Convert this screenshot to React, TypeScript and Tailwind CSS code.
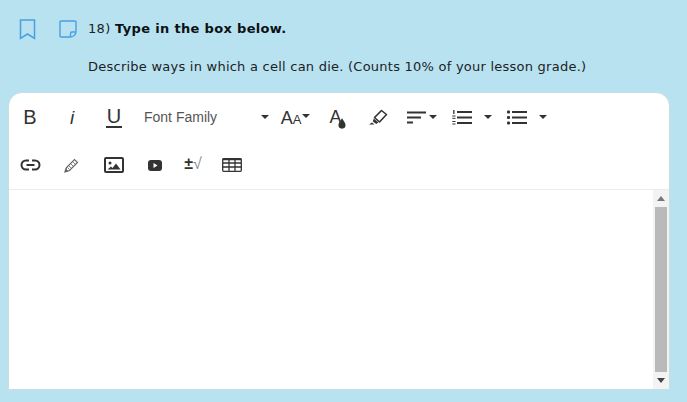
import type { ReactNode } from 'react'

const Caret = ({ className = '' }: { className?: string }) => (
  <svg width="8" height="4" viewBox="0 0 8 4" className={className}>
    <path d="M0 0h8L4 4z" fill="#333" />
  </svg>
)

function ToolButton({ children, className = 'w-[42px]' }: { children: ReactNode; className?: string }) {
  return <div className={`flex h-[48px] shrink-0 items-center justify-center text-[#333] ${className}`}>{children}</div>
}

const Bookmark = () => (
  <svg width="17" height="21" viewBox="0 0 17 21" fill="none" stroke="#4a9fe3" strokeWidth="1.500">
    <path d="M1.500 1h14v18.500l-7-4.500-7 4.500z" />
  </svg>
)

const Note = () => (
  <svg width="18" height="18" viewBox="0 0 18 18" fill="none" stroke="#4a9fe3" strokeWidth="1.400">
    <path d="M11.500 17H2a1 1 0 0 1-1-1V2a1 1 0 0 1 1-1h14a1 1 0 0 1 1 1v9.500c0 3-2.500 5.500-5.500 5.500z" />
    <path d="M11.500 16.500v-3a1.500 1.500 0 0 1 1.500-1.500h3.500" />
  </svg>
)

const Lines = ({ ordered }: { ordered?: boolean }) => (
  <svg width="20" height="15" viewBox="0 0 20 15" fill="#333">
    <rect x="5" y="1" width="15" height="2" />
    <rect x="5" y="6.500" width="15" height="2" />
    <rect x="5" y="12" width="15" height="2" />
    {ordered ? (
      <>
        <rect x="1.200" y="0" width="1.300" height="4" />
        <rect x="0.300" y="5.500" width="3.200" height="1" />
        <rect x="0.300" y="7.800" width="3.200" height="1" />
        <rect x="0.300" y="11" width="3.200" height="1" />
        <rect x="0.300" y="13.500" width="3.200" height="1" />
      </>
    ) : (
      <>
        <rect x="0" y="0.500" width="3" height="3" rx="1" />
        <rect x="0" y="6" width="3" height="3" rx="1" />
        <rect x="0" y="11.500" width="3" height="3" rx="1" />
      </>
    )}
  </svg>
)

export default function App() {
  return (
    <div className="h-[402px] w-[687px] overflow-hidden bg-[#b8e2f0] font-['DejaVu_Sans',sans-serif] text-[13px] text-[#1c2326]">
      <div className="flex h-[56px] items-center pl-[19px] pt-[2px]">
        <Bookmark />
        <div className="ml-[23px]">
          <Note />
        </div>
        <p className="ml-[11px] tracking-[0.33px]">
          18) <b className="text-[#0c1114]">Type in the box below.</b>
        </p>
      </div>
      <p className="ml-[88px] mt-[3px] h-[33px] leading-[16px] tracking-[0.24px]">
        Describe ways in which a cell can die. (Counts 10% of your lesson grade.)
      </p>

      <div className="ml-[8px] flex h-[298px] w-[662px] flex-col overflow-hidden rounded-t-[14px] border border-[#c9dde4] bg-white">
        <div className="h-[97px] shrink-0 border-b border-[#ececec] font-['Liberation_Sans',sans-serif]">
          <div className="flex h-[48px]">
            <ToolButton><span className="text-[20px] leading-none">B</span></ToolButton>
            <ToolButton><span className="text-[19px] italic leading-none">i</span></ToolButton>
            <ToolButton>
              <span className="border-b-2 border-[#333] px-[1px] text-[20px] leading-[20px]">U</span>
            </ToolButton>
            <div className="flex h-[48px] w-[140px] shrink-0 items-center pl-[9px] text-[14px] text-[#555]">
              <span>Font Family</span>
              <Caret className="ml-auto mr-[6px]" />
            </div>
            <ToolButton className="w-[41px]">
              <span className="flex items-baseline pt-[2px]">
                <span className="text-[18px] leading-none">A</span>
                <span className="text-[13px] leading-none">A</span>
              </span>
              <Caret className="mb-[2px] ml-[1px]" />
            </ToolButton>
            <ToolButton className="w-[41px]">
              <span className="relative block h-[24px] w-[14px]">
                <span className="absolute left-0 top-[3px] text-[18px] leading-none">A</span>
                <svg width="8" height="11" viewBox="0 0 9 12" className="absolute left-[8px] top-[13px]">
                  <path d="M4.500 0C6 3 8.500 5 8.500 7.800a4 4 0 0 1-8 0C.5 5 3 3 4.500 0z" fill="#333" />
                </svg>
              </span>
            </ToolButton>
            <ToolButton>
              <svg width="19" height="17" viewBox="0 0 19 17" fill="none">
                <path d="M5.500 8.500L12.500 1.500l5 4-7 7.500z" stroke="#333" strokeWidth="1.600" strokeLinejoin="round" />
                <path d="M4.800 9.500l4.500 4-2 1.500-3.500-2.500zM3 13.500l2.500 2H0z" fill="#333" />
              </svg>
            </ToolButton>
            <ToolButton className="w-[46px]">
              <svg width="19" height="13" viewBox="0 0 19 13" fill="#333">
                <rect y="0.500" width="19" height="2" />
                <rect y="5.500" width="14" height="2" />
                <rect y="10.500" width="6" height="2" />
              </svg>
              <Caret className="ml-[3px]" />
            </ToolButton>
            <ToolButton className="w-[34px]"><Lines ordered /></ToolButton>
            <ToolButton className="w-[18px]"><Caret /></ToolButton>
            <ToolButton className="w-[40px]"><Lines /></ToolButton>
            <ToolButton className="w-[12px]"><Caret /></ToolButton>
          </div>
          <div className="flex h-[48px]">
            <ToolButton>
              <svg width="21" height="12" viewBox="0 0 21 12" fill="none" stroke="#333" strokeWidth="2">
                <path d="M9 1.500H6a4.500 4.500 0 0 0 0 9h3M12 1.500h3a4.500 4.500 0 0 1 0 9h-3M6.500 6h8" />
              </svg>
            </ToolButton>
            <ToolButton className="w-[40px]">
              <svg width="15" height="15" viewBox="0 0 15 15" fill="none" stroke="#666" strokeWidth="1.200">
                <path d="M1.500 13.500l1-4L10.500 1.500l3 3-8 8z" />
                <path d="M3.500 9.500l2 2M5 8l2 2M7 6l2 2M9 4l2 2" strokeWidth="0.800" />
                <path d="M1 14l.7-2.500L3.500 13.300z" fill="#666" />
              </svg>
            </ToolButton>
            <ToolButton className="w-[46px]">
              <svg width="20" height="16" viewBox="0 0 20 16" fill="none">
                <rect x="1" y="1" width="18" height="14" rx="1" stroke="#333" strokeWidth="2" />
                <circle cx="6" cy="6" r="1.500" fill="#333" />
                <path d="M3.500 12.500l3.500-3 1.500 1.500 3.500-4.500 4.500 6z" fill="#333" />
              </svg>
            </ToolButton>
            <ToolButton className="w-[36px]">
              <svg width="14" height="11" viewBox="0 0 14 11">
                <rect width="14" height="11" rx="3" fill="#333" />
                <path d="M5.500 3l4 2.500-4 2.500z" fill="#fff" />
              </svg>
            </ToolButton>
            <ToolButton className="w-[40px]">
              <span className="pb-[3px] text-[16px] font-bold leading-none">±<span className="font-normal text-[#888]">√</span></span>
            </ToolButton>
            <ToolButton className="w-[38px]">
              <svg width="20" height="14" viewBox="0 0 20 14" fill="none" stroke="#333" strokeWidth="1.300">
                <rect x="0.700" y="0.700" width="18.600" height="12.600" rx="1" />
                <path d="M0.700 5h18.600M0.700 9h18.600M7 .7v12.600M13 .7v12.600" />
                <path d="M0.700 1.200h18.600" strokeWidth="2" />
              </svg>
            </ToolButton>
          </div>
        </div>

        <div className="flex flex-1 justify-end">
          <div className="flex w-[16px] flex-col items-center bg-[#f3f3f3]">
            <div className="flex h-[17px] items-center justify-center">
              <svg width="8" height="5" viewBox="0 0 8 5"><path d="M4 0l4 5H0z" fill="#777" /></svg>
            </div>
            <div className="h-[165px] w-[12px] bg-[#bababa]" />
            <div className="flex flex-1 items-center justify-center">
              <svg width="8" height="5" viewBox="0 0 8 5"><path d="M0 0h8L4 5z" fill="#444" /></svg>
            </div>
          </div>
        </div>
      </div>
    </div>
  )
}
